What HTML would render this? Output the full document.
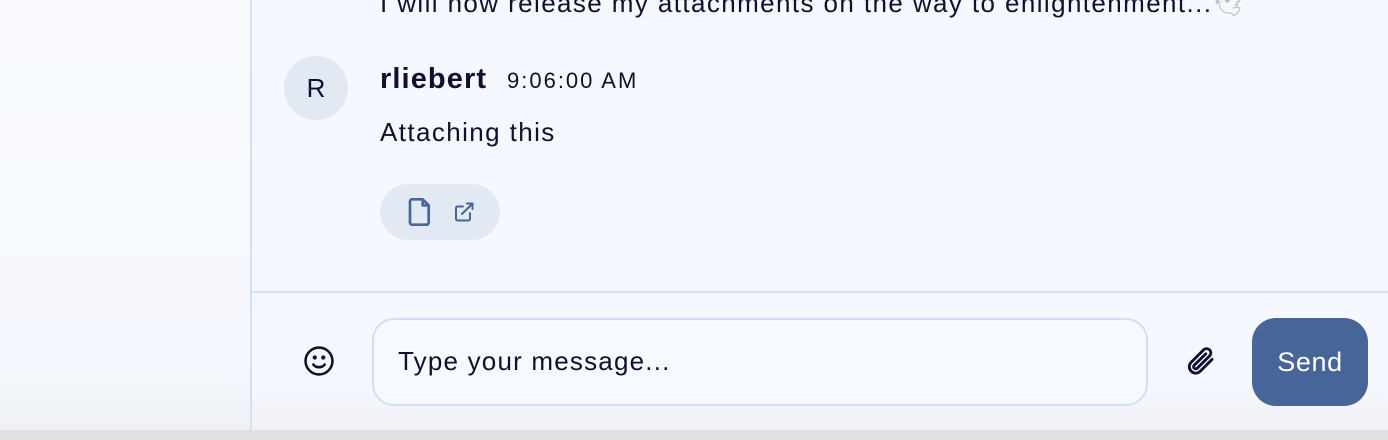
<!DOCTYPE html>
<html><head><style>
body{margin:0;width:1388px;height:440px;overflow:hidden;background:#f5f8fe;font-family:"Liberation Sans",sans-serif;color:#0f1030;position:relative}
.side{position:absolute;left:0;top:0;width:250px;height:430px;background:linear-gradient(#f8fafd 0%,#f5f8fe 85%,#eef0f5 100%);border-right:2px solid #d3e1f7}
.main{position:absolute;left:252px;top:0;width:1136px;height:430px;background:linear-gradient(#f5f8fe 0%,#f5f8fe 88%,#eff1f6 100%)}
.bar{position:absolute;left:0;top:430px;width:1388px;height:10px;background:#e0e0e0}
.t{position:absolute;white-space:nowrap}
</style></head><body>
<div class="side"></div>
<div class="main"></div>
<div class="t" style="left:380px;top:-12px;font-size:26px;letter-spacing:1.4px">I will now release my attachments on the way to enlightenment...<span style="color:#bbb">🕊</span></div>
<div style="position:absolute;left:284px;top:56px;width:64px;height:64px;border-radius:50%;background:#e3e9f3;font-size:26px;line-height:64px;text-align:center">R</div>
<div class="t" style="left:380px;top:63px;font-size:29px;font-weight:bold;letter-spacing:1.1px">rliebert</div>
<div class="t" style="left:507px;top:68px;font-size:22px;letter-spacing:2px">9:06:00 AM</div>
<div class="t" style="left:380px;top:117px;font-size:26px;letter-spacing:1.4px">Attaching this</div>
<div style="position:absolute;left:380px;top:184px;width:120px;height:56px;border-radius:28px;background:#e3e9f3"></div>
<svg style="position:absolute;left:404px;top:196px" width="32" height="32" viewBox="0 0 24 24" fill="none" stroke="#476599" stroke-width="2" stroke-linejoin="round"><path d="M6 2.5h8l4.5 4.5v13a1.5 1.5 0 0 1-1.5 1.5H6a1.5 1.5 0 0 1-1.5-1.5V4A1.5 1.5 0 0 1 6 2.5z M14 2.5V7h4.5"/></svg>
<svg style="position:absolute;left:452px;top:200px" width="24" height="24" viewBox="0 0 24 24" fill="none" stroke="#476599" stroke-width="2" stroke-linecap="round"><path d="M18 13v6a1.5 1.5 0 0 1-1.5 1.5h-11A1.5 1.5 0 0 1 4 19V8a1.5 1.5 0 0 1 1.5-1.5H11 M15 3.5h5.5V9 M10 14L20.5 3.5"/></svg>
<div style="position:absolute;left:252px;top:291px;width:1136px;height:2px;background:#d3e1f7"></div>
<svg style="position:absolute;left:302px;top:344px" width="34" height="34" viewBox="0 0 24 24" fill="none" stroke="#0f1030" stroke-width="1.8" stroke-linecap="round"><circle cx="12" cy="12" r="9.5"/><path d="M8 14.5c2 2.5 6 2.5 8 0"/><circle cx="9" cy="9.5" r=".6" fill="#0f1030"/><circle cx="15" cy="9.5" r=".6" fill="#0f1030"/></svg>
<div style="position:absolute;left:372px;top:318px;width:772px;height:84px;border:2px solid #d0dff7;border-radius:22px;background:#f6f9ff"></div>
<div class="t" style="left:398px;top:346px;font-size:26px;letter-spacing:1.2px">Type your message...</div>
<svg style="position:absolute;left:1182px;top:342px" width="38" height="38" viewBox="0 0 24 24" fill="none" stroke="#0f1030" stroke-width="1.8" stroke-linecap="round"><path d="M19 11l-7.5 7.5a4 4 0 0 1-5.7-5.7l8-8a2.7 2.7 0 0 1 3.8 3.8l-8 8a1.3 1.3 0 0 1-1.9-1.9L15 7.5"/></svg>
<div style="position:absolute;left:1252px;top:318px;width:116px;height:88px;border-radius:24px;background:#476599;color:#fff;font-size:27px;letter-spacing:0.6px;line-height:88px;text-align:center">Send</div>
<div class="bar"></div>
</body></html>
